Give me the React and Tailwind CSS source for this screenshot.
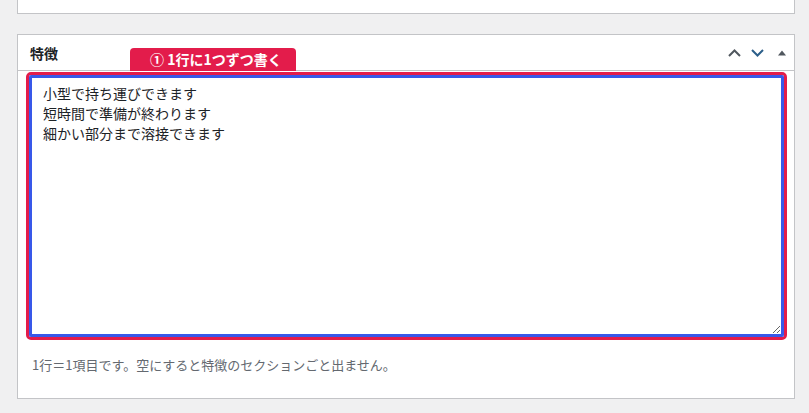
import { useState } from "react";

const jp = { fontFamily: '"Noto Sans CJK JP", "Noto Sans", sans-serif' };

export default function App() {
  const [text, setText] = useState(
    "小型で持ち運びできます\n短時間で準備が終わります\n細かい部分まで溶接できます"
  );

  return (
    <div className="min-h-[413px] bg-[#f0f0f1] overflow-hidden" style={jp}>
      <div className="ml-[17px] w-[778px] h-[14px] bg-white border-x border-b border-[#c3c4c7]" />

      <div className="ml-[17px] mt-[20px] w-[778px] bg-white border border-[#c3c4c7]">
        <div className="relative h-[36px] border-b border-[#c3c4c7] flex items-center pl-[12px] pr-0">
          <h2 className="text-[14px] font-bold text-[#1d2327] leading-none">特徴</h2>
          <div className="ml-auto flex items-center">
            <button className="w-[24px] h-[24px] flex items-center justify-center">
              <svg width="13" height="8" viewBox="0 0 13 8">
                <path d="M1 7 L6.5 1.5 L12 7" fill="none" stroke="#50575e" strokeWidth="2" />
              </svg>
            </button>
            <button className="w-[24px] h-[24px] flex items-center justify-center ml-[-1px]">
              <svg width="13" height="8" viewBox="0 0 13 8">
                <path d="M1 1 L6.5 6.5 L12 1" fill="none" stroke="#2c5f8a" strokeWidth="2" />
              </svg>
            </button>
            <button className="w-[24px] h-[24px] flex items-center justify-center ml-[1px]">
              <svg width="8" height="6" viewBox="0 0 8 6">
                <path d="M0 5.5 L4 0.5 L8 5.5 Z" fill="#50575e" />
              </svg>
            </button>
          </div>
          <div className="absolute left-[112px] top-[13px] h-[23px] pl-[20px] pr-[14px] bg-[#e31c4b] rounded-t-[4px] text-white font-bold text-[14px] leading-[23px] whitespace-nowrap">
            ① 1行に1つずつ書く
          </div>
        </div>

        <div className="pt-[1px] pl-[8px] pb-[24px]">
          <div className="w-[761px] h-[268px] border-[3px] border-[#e31c4b] rounded-[5px]">
            <textarea
              className="block w-full h-full border-[3px] border-[#3858e9] rounded-[2px] px-[11px] py-[5px] text-[14px] leading-[20px] text-[#1d2327] outline-none resize"
              style={jp}
              value={text}
              onChange={(e) => setText(e.target.value)}
            />
          </div>
          <p className="mt-[16px] ml-[6px] text-[13px] leading-[18px] text-[#646970]">
            1行＝1項目です。空にすると特徴のセクションごと出ません。
          </p>
        </div>
      </div>
    </div>
  );
}
